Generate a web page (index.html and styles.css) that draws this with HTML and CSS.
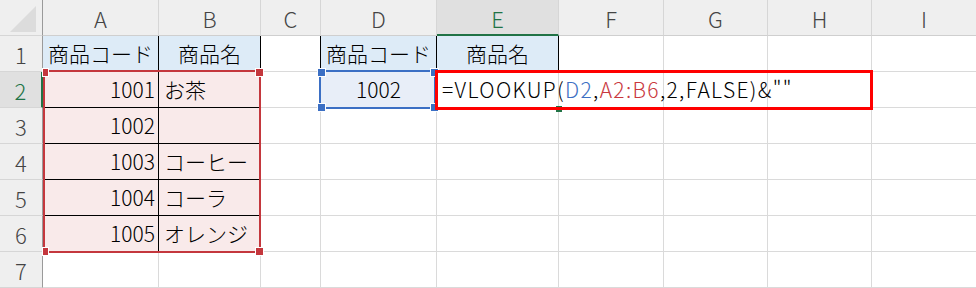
FILE: index.html
```html
<!DOCTYPE html>
<html lang="ja">
<head>
<meta charset="utf-8">
<link rel="stylesheet" href="styles.css">
</head>
<body>
<div class="sheet">
  <div class="hd corner"><span class="tri"></span></div>
  <div class="hd col">A</div>
  <div class="hd col">B</div>
  <div class="hd col">C</div>
  <div class="hd col">D</div>
  <div class="hd col active">E</div>
  <div class="hd col">F</div>
  <div class="hd col">G</div>
  <div class="hd col">H</div>
  <div class="hd col last">I</div>

  <div class="hd row">1</div>
  <div class="c th bk">商品コード</div>
  <div class="c th bk">商品名</div>
  <div class="c bkr"></div>
  <div class="c th bk">商品コード</div>
  <div class="c th bk">商品名</div>
  <div class="c"></div><div class="c"></div><div class="c"></div><div class="c last"></div>

  <div class="hd row active">2</div>
  <div class="c num bk pink">1001</div>
  <div class="c txt bk pink">お茶</div>
  <div class="c"></div>
  <div class="c ctr sel">1002</div>
  <div class="c txt formula">=VLOOKUP(<span class="ref-b">D2</span>,<span class="ref-r">A2:B6</span>,2,FALSE)&amp;""</div>
  <div class="c"></div><div class="c"></div><div class="c"></div><div class="c last"></div>

  <div class="hd row">3</div>
  <div class="c num bk pink">1002</div>
  <div class="c txt bk pink"></div>
  <div class="c"></div><div class="c"></div><div class="c"></div><div class="c"></div><div class="c"></div><div class="c"></div><div class="c last"></div>

  <div class="hd row">4</div>
  <div class="c num bk pink">1003</div>
  <div class="c txt bk pink">コーヒー</div>
  <div class="c"></div><div class="c"></div><div class="c"></div><div class="c"></div><div class="c"></div><div class="c"></div><div class="c last"></div>

  <div class="hd row">5</div>
  <div class="c num bk pink">1004</div>
  <div class="c txt bk pink">コーラ</div>
  <div class="c"></div><div class="c"></div><div class="c"></div><div class="c"></div><div class="c"></div><div class="c"></div><div class="c last"></div>

  <div class="hd row">6</div>
  <div class="c num bk pink">1005</div>
  <div class="c txt bk pink">オレンジ</div>
  <div class="c"></div><div class="c"></div><div class="c"></div><div class="c"></div><div class="c"></div><div class="c"></div><div class="c last"></div>

  <div class="hd row">7</div>
  <div class="c"></div><div class="c"></div><div class="c"></div><div class="c"></div><div class="c"></div><div class="c"></div><div class="c"></div><div class="c"></div><div class="c last"></div>

  <div class="range red-range">
    <span class="h tl"></span><span class="h tr"></span><span class="h bl"></span><span class="h br"></span>
  </div>
  <div class="range blue-range">
    <span class="h tl"></span><span class="h tr"></span><span class="h bl"></span><span class="h br"></span>
  </div>
  <div class="fill-handle"></div>
  <div class="annot"></div>
</div>
</body>
</html>
```

FILE: styles.css
```css
* { box-sizing: border-box; }
html, body { margin: 0; padding: 0; background: #fff; }
body { width: 976px; height: 288px; overflow: hidden; }

.sheet {
  position: relative;
  display: grid;
  grid-template-columns: 43px 116px 102px 60px 116px 122px 105px 104px 104px 1fr;
  grid-template-rows: repeat(8, 36px);
  width: 976px;
  height: 288px;
  font-family: "Noto Sans CJK JP", "Noto Sans", sans-serif;
  font-weight: 300;
  font-size: 21px;
  color: #000;
}

.hd {
  background: #efefef;
  color: #444;
  font-size: 22px;
  display: flex;
  align-items: center;
  justify-content: center;
  border-right: 1px solid #d6d6d6;
  border-bottom: 1px solid #d6d6d6;
}
.hd.corner { position: relative; border-right: 1px solid #9a9a9a; }
.tri {
  width: 0; height: 0;
  border-left: 26px solid transparent;
  border-bottom: 26px solid #dcdcdc;
  margin-top: 2px;
  margin-left: 4px;
}
.hd.col { border-bottom: 1px solid #cfcfcf; padding-top: 1px; }
.hd.row { border-right: 1px solid #9a9a9a; }
.hd.last, .c.last { border-right: none; }
.hd.col.active {
  background: #e0e0e0;
  color: #217346;
  border-bottom: 2px solid #217346;
}
.hd.row.active {
  background: #e0e0e0;
  color: #217346;
  border-right: 2px solid #217346;
}

.c {
  border-right: 1px solid #dadada;
  border-bottom: 1px solid #dadada;
  display: flex;
  align-items: center;
  white-space: nowrap;
  line-height: 1;
}
.c.bk { border-right-color: #000; border-bottom-color: #000; }
.c.bkr { border-right-color: #000; }
.c.th { background: #ddebf7; justify-content: center; }
.c.pink { background: #f9eaea; }
.c.num { justify-content: flex-end; padding-right: 3px; }
.c.txt { justify-content: flex-start; padding-left: 5px; }
.c.ctr { justify-content: center; }
.c.sel { background: #e8eef8; }
.c.formula { overflow: visible; position: relative; z-index: 1; letter-spacing: 1.35px; }
.ref-b { color: #3d6fc3; }
.ref-r { color: #c9383e; }

.range { position: absolute; pointer-events: none; z-index: 2; }
.red-range { left: 43px; top: 70px; width: 218px; height: 183px; border: 2px solid #c4373d; }
.blue-range { left: 319px; top: 70px; width: 117px; height: 39px; border: 2px solid #3b6fc4; }
.h { position: absolute; width: 7px; height: 7px; outline: 1px solid #fff; }
.red-range .h { background: #c4373d; }
.blue-range .h { background: #3b6fc4; }
.h.tl { left: -3px; top: -3px; }
.h.tr { right: -4px; top: -3px; }
.h.bl { left: -3px; bottom: -4px; }
.h.br { right: -4px; bottom: -4px; }
.red-range .h.tl, .red-range .h.bl { left: -2px; width: 5px; }

.fill-handle { position: absolute; left: 556px; top: 106px; width: 6px; height: 6px; background: #217346; z-index: 2; }
.annot { position: absolute; left: 435px; top: 70px; width: 438px; height: 40px; border: 3px solid #ff0000; z-index: 3; }
```
